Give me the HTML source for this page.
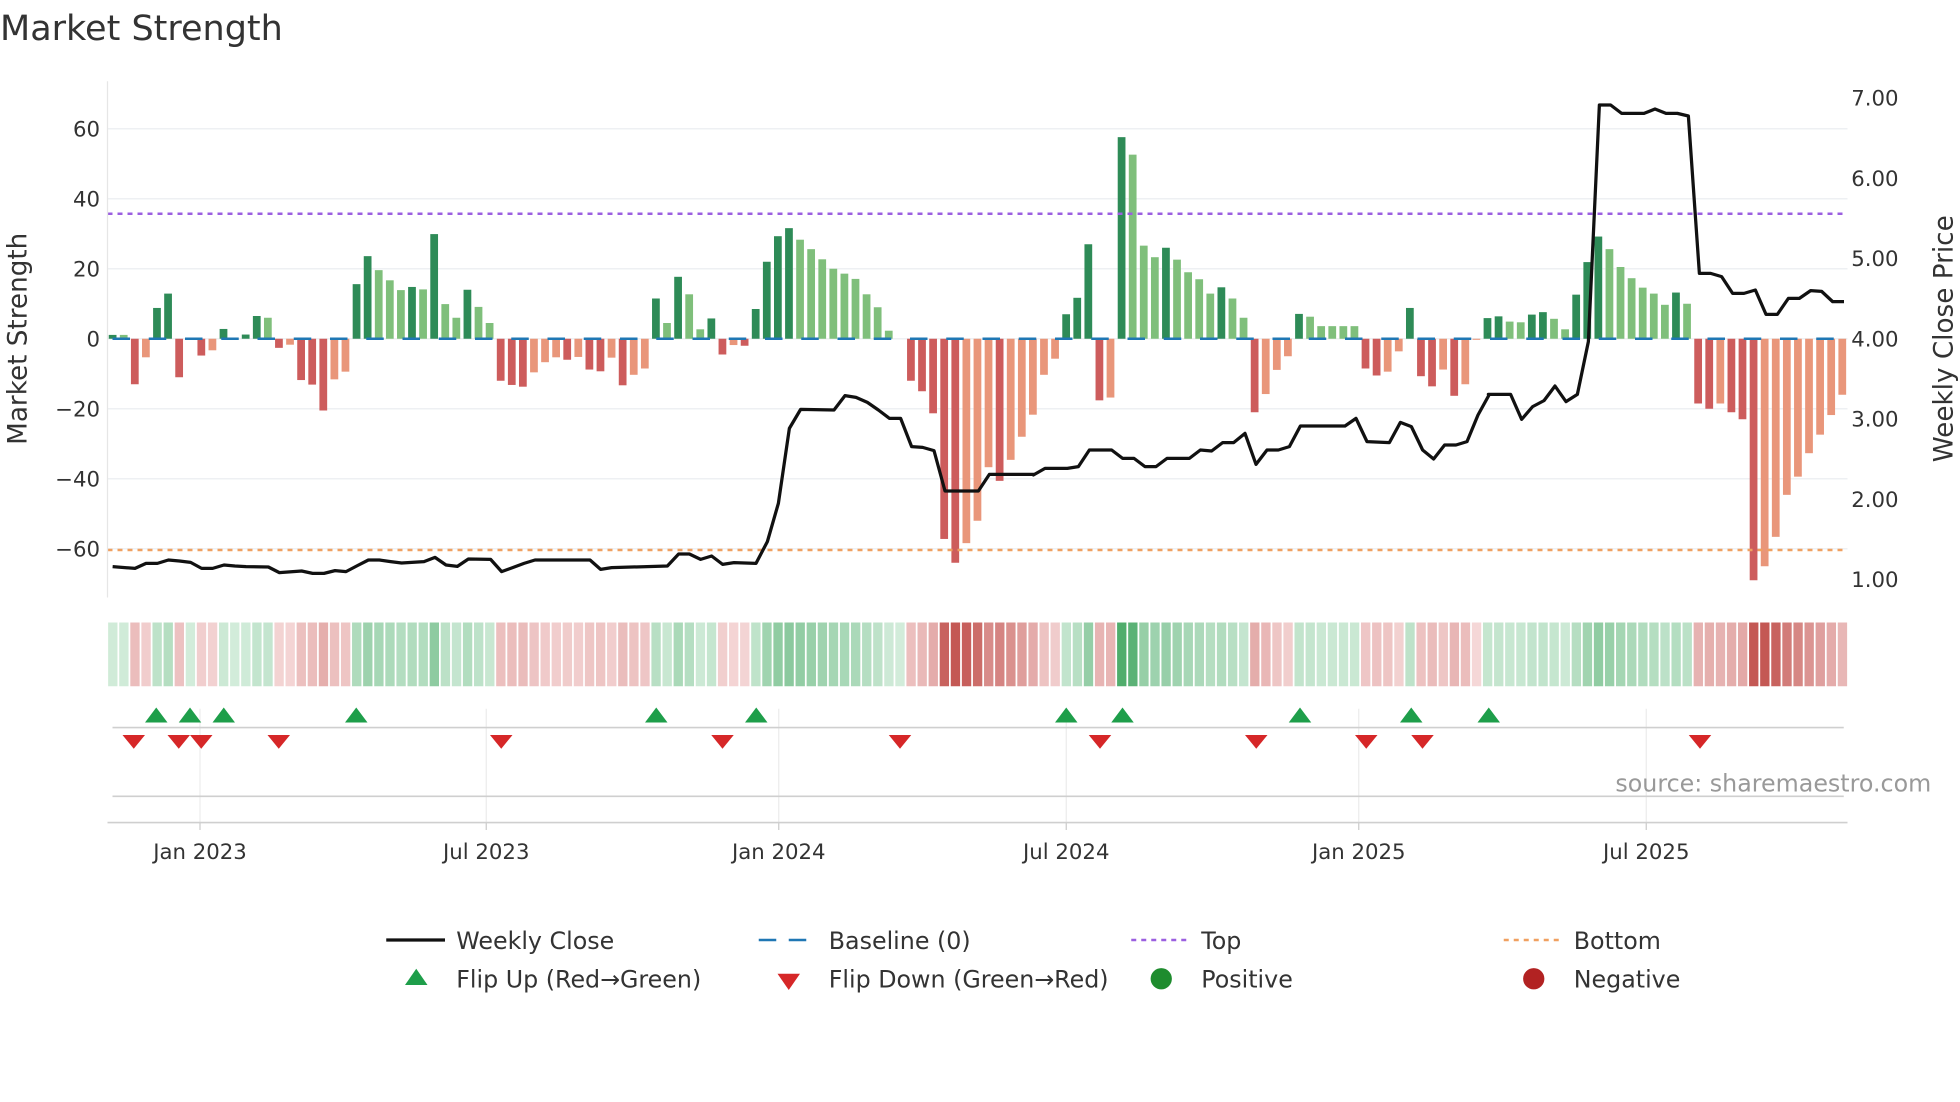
<!DOCTYPE html>
<html><head><meta charset="utf-8"><style>
html,body{margin:0;padding:0;background:#fff;}
svg{display:block;font-family:"DejaVu Sans","Liberation Sans",sans-serif;}
</style></head><body>
<svg id="s" width="1960" height="1102" viewBox="0 0 1568 881.6" xmlns="http://www.w3.org/2000/svg">
<rect width="1568" height="882" fill="#fff"/>
<text x="0" y="32" font-size="28" fill="#333">Market Strength</text>
<g id="grid"></g>
<g id="bars"></g>
<line x1="86" y1="171" x2="1478" y2="171" stroke="#9b5fe0" stroke-width="2" stroke-dasharray="4 4"/>
<line x1="86" y1="440" x2="1478" y2="440" stroke="#f0a060" stroke-width="2" stroke-dasharray="4 4"/>
<line x1="90" y1="271" x2="1478" y2="271" stroke="#1f77b4" stroke-width="2" stroke-dasharray="14 15"/>
<polyline id="price" fill="none" stroke="#111" stroke-width="2.6" stroke-linejoin="round"/>
<line x1="86" y1="65" x2="86" y2="478" stroke="#e6e6e6" stroke-width="1"/>
<g id="strip"></g>
<g id="lower"></g>
<text x="1545" y="633" font-size="19" fill="#999" text-anchor="end">source: sharemaestro.com</text>
<g font-size="19" fill="#333">
<line x1="309" y1="752" x2="356" y2="752" stroke="#111" stroke-width="2.6"/>
<text x="365" y="759">Weekly Close</text>
<line x1="607" y1="752" x2="652" y2="752" stroke="#1f77b4" stroke-width="2" stroke-dasharray="14 10"/>
<text x="663" y="759">Baseline (0)</text>
<line x1="905" y1="752" x2="950" y2="752" stroke="#9b5fe0" stroke-width="2" stroke-dasharray="4 4"/>
<text x="961" y="759">Top</text>
<line x1="1203" y1="752" x2="1248" y2="752" stroke="#f0a060" stroke-width="2" stroke-dasharray="4 4"/>
<text x="1259" y="759">Bottom</text>
<polygon points="324,788 342,788 333,775" fill="#1e9e4a"/>
<text x="365" y="790">Flip Up (Red→Green)</text>
<polygon points="622,779 640,779 631,792" fill="#d62728"/>
<text x="663" y="790">Flip Down (Green→Red)</text>
<circle cx="929" cy="783" r="8.5" fill="#1e8c2e"/>
<text x="961" y="790">Positive</text>
<circle cx="1227" cy="783" r="8.5" fill="#b22222"/>
<text x="1259" y="790">Negative</text>
</g>
</svg>
<script>
var NS="http://www.w3.org/2000/svg";
function el(p,t,a,txt){var e=document.createElementNS(NS,t);for(var k in a)e.setAttribute(k,a[k]);if(txt!==undefined)e.textContent=txt;document.getElementById(p).appendChild(e);return e;}
var v=[1.1,1.1,-13,-5.3,8.8,12.9,-11,0,-4.8,-3.3,2.8,0,1.2,6.5,6,-2.6,-1.7,-11.8,-13.1,-20.5,-11.6,-9.4,15.6,23.6,19.6,16.7,13.9,14.8,14.1,29.9,9.9,6,14,9.1,4.5,-12,-13.2,-13.7,-9.6,-6.7,-5.3,-6,
-5.2,-8.8,-9.3,-5.4,-13.3,-10.3,-8.5,11.5,4.5,17.7,12.7,2.7,5.8,-4.5,-1.8,-2,8.5,22,29.3,31.6,28.3,25.6,22.7,20,18.6,17.1,12.7,9,2.3,0,-12,-15,-21.3,-57.2,-64,-58.4,-52,-36.7,-40.6,-34.6,-28,-21.7,
-10.3,-5.7,7,11.7,27,-17.6,-16.8,57.6,52.6,26.6,23.3,26,22.6,19,17,12.9,14.7,11.5,6,-21,-15.8,-8.9,-5,7.1,6.3,3.6,3.6,3.6,3.6,-8.5,-10.5,-9.4,-3.6,8.8,-10.7,-13.6,-8.8,-16.3,-13,-0.3,
5.9,6.4,4.9,4.7,6.9,7.6,5.7,2.7,12.6,21.9,29.2,25.6,20.5,17.3,14.6,12.9,9.7,13.2,10,-18.5,-20,-18.5,-21,-23,-69,-65,-56.6,-44.6,-39.4,-32.7,-27.4,-21.8,-16];
var P=8.87,X0=90.1,Z=271,K=2.8;
[60,40,20,0,-20,-40,-60].forEach(function(t){var y=Z-t*K;
 el("grid","line",{x1:86,y1:y,x2:1478,y2:y,stroke:"#eef0f3","stroke-width":1.2});
 el("grid","text",{x:80,y:y+6,"font-size":17,fill:"#333","text-anchor":"end"},(t<0?"\u2212"+(-t):t));});
[7,6,5,4,3,2,1].forEach(function(p){var y=271-(p-4)*64.2;
 el("grid","text",{x:1481,y:y+6,"font-size":17,fill:"#333"},p.toFixed(2));});
el("grid","text",{x:0,y:0,"font-size":21,fill:"#333","text-anchor":"middle",transform:"translate(21,271) rotate(-90)"},"Market Strength");
el("grid","text",{x:0,y:0,"font-size":21,fill:"#333","text-anchor":"middle",transform:"translate(1562,271) rotate(-90)"},"Weekly Close Price");
for(var i=0;i<v.length;i++){var x=X0+i*P,a=v[i];if(Math.abs(a)<0.2)continue;
 var prev=i?Math.abs(v[i-1]):0,dark=Math.abs(a)>prev||(i&&v[i-1]*a<0);
 var c=a>0?(dark?"#2e8b57":"#7fbf7b"):(dark?"#cd5c5c":"#e9967a");
 var h=Math.abs(a)*K;el("bars","rect",{x:x-3.1,y:a>0?Z-h:Z,width:6.2,height:h,fill:c});}
function mix(c1,c2,t){return "rgb("+[0,1,2].map(function(k){return Math.round(c1[k]+(c2[k]-c1[k])*t)}).join(",")+")";}
for(var i=0;i<v.length;i++){var x=86+i*P,a=v[i],t=Math.min(1,Math.abs(a)/62);
 var c=a>=0?mix([210,236,218],[70,168,100],t):mix([245,216,216],[196,88,84],t);
 el("strip","rect",{x:x+0.5,y:498,width:P-1.4,height:51,fill:c});}
var pts=[];
function add(list,ox,oy){list.forEach(function(p){pts.push([(ox+p[0]/3)/1.25,(oy+p[1]/3)/1.25]);});}
add([[38,1100],[105,1105],[138,1090],[172,1090],[205,1080],[238,1083],[272,1087],[305,1105],[338,1105],[372,1095],[405,1098],[438,1100],[505,1101],[538,1118],[605,1113],[638,1120],[672,1120],[705,1112],[738,1115],[772,1097],[805,1080],[838,1080],[872,1085],[905,1089],[972,1085],[1005,1072],[1038,1095],[1072,1099],[1105,1077],[1172,1078],[1205,1115],[1238,1103],[1272,1090],[1305,1080],[1420,1080]],100,200);
add([[90,1080],[122,1108],[155,1103],[322,1098],[356,1062],[388,1062],[422,1078],[455,1068],[488,1093],[522,1088],[588,1090],[622,1025],[655,910],[688,685],[722,628],[822,630],[855,587],[888,592],[922,607],[955,630],[988,655],[1022,655],[1055,740],[1088,742],[1122,752],[1155,873],[1188,873],[1255,873],[1288,823],[1422,823]],560,200);
add([[40,1125],[75,1105],[142,1105],[175,1100],[208,1050],[275,1050],[308,1075],[342,1075],[375,1100],[408,1100],[441,1075],[508,1075],[541,1050],[575,1053],[608,1028],[641,1028],[675,1000],[708,1093],[741,1050],[775,1050],[808,1040],[841,978],[975,978],[1008,955],[1041,1025],[1108,1028],[1141,967],[1174,980],[1208,1050],[1241,1077],[1274,1035],[1308,1035],[1341,1025],[1374,945],[1408,883]],1020,100);
add([[25,943],[92,943],[125,1018],[158,980],[192,962],[225,918],[258,965],[292,943],[325,785],[358,75],[392,75],[425,100],[492,100],[525,87],[558,100],[592,100],[625,108],[658,580],[692,580],[725,590],[758,640],[792,640],[826,630],[858,703],[892,703],[925,655],[958,655],[992,632],[1025,634],[1058,665],[1092,665]],1480,80);
document.getElementById("price").setAttribute("points",pts.map(function(p){return p[0].toFixed(1)+","+p[1].toFixed(1)}).join(" "));
var ticks=[[160,"Jan 2023"],[389,"Jul 2023"],[623,"Jan 2024"],[853,"Jul 2024"],[1087,"Jan 2025"],[1317,"Jul 2025"]];
ticks.forEach(function(t){el("lower","line",{x1:t[0],y1:567,x2:t[0],y2:658,stroke:"#ececec","stroke-width":1});
 el("lower","line",{x1:t[0],y1:658,x2:t[0],y2:664,stroke:"#ccc","stroke-width":1});
 el("lower","text",{x:t[0],y:687,"font-size":17,fill:"#333","text-anchor":"middle"},t[1]);});
el("lower","line",{x1:90,y1:582,x2:1475,y2:582,stroke:"#cfcfcf","stroke-width":1.3});
el("lower","line",{x1:90,y1:637,x2:1475,y2:637,stroke:"#cfcfcf","stroke-width":1.3});
el("lower","line",{x1:86,y1:658,x2:1478,y2:658,stroke:"#cfcfcf","stroke-width":1.3});
[125,152,179,285,525,605,853,898,1040,1129,1191].forEach(function(x){el("lower","polygon",{points:(x-9)+",578 "+(x+9)+",578 "+x+",566",fill:"#1e9e4a"});});
[107,143,161,223,401,578,720,880,1005,1093,1138,1360].forEach(function(x){el("lower","polygon",{points:(x-9)+",588 "+(x+9)+",588 "+x+",599",fill:"#d62728"});});
</script>
</body></html>
